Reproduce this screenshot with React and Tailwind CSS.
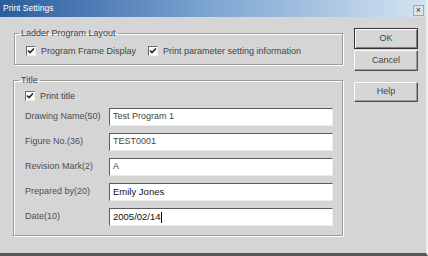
import React from 'react';

const font = { fontFamily: '"Liberation Sans", Arial, sans-serif' };

const CheckBox = ({ label, className = '' }) => (
  <label className={`flex items-center gap-[5px] ${className}`}>
    <span className="w-[10px] h-[10px] bg-white border border-t-[#6b6b6b] border-l-[#6b6b6b] border-b-[#f0f0f0] border-r-[#f0f0f0] flex items-center justify-center">
      <svg width="8" height="8" viewBox="0 0 8 8">
        <path d="M1 3.5 L3 5.5 L7 1.5" fill="none" stroke="#222" strokeWidth="1.6" />
      </svg>
    </span>
    <span className="text-[9px] leading-[12px] text-[#444]">{label}</span>
  </label>
);

const Button = ({ children, isDefault, className = '' }) => (
  <button
    className={`w-[64px] text-[9px] text-[#444] bg-[#d6d6d6] border ${
      isDefault
        ? 'border-[#333] shadow-[inset_1px_1px_0_#fff,inset_-1px_-1px_0_#808080]'
        : 'border-t-[#fafafa] border-l-[#fafafa] border-b-[#505050] border-r-[#505050] shadow-[inset_-1px_-1px_0_#9a9a9a]'
    } ${className}`}
  >
    {children}
  </button>
);

const fields = [
  { label: 'Drawing Name(50)', value: 'Test Program 1' },
  { label: 'Figure No.(36)', value: 'TEST0001' },
  { label: 'Revision Mark(2)', value: 'A' },
  { label: 'Prepared by(20)', value: 'Emily Jones', dark: true },
  { label: 'Date(10)', value: '2005/02/14', dark: true, cursor: true },
];

export default function App() {
  return (
    <div className="w-[428px] h-[256px] bg-[#d5d5d5] flex flex-col border-b-[3px] border-b-[#575757] border-r-2 border-r-[#eef0ee]" style={font}>
      {/* title bar */}
      <div className="h-[17px] flex items-center justify-between pl-[3px] pr-[2px] bg-gradient-to-r from-[#2a5c9e] via-[#7ea6d2] to-[#d4e3f1]">
        <span className="text-[8.5px] text-white">Print Settings</span>
        <span className="self-start mt-[5px] w-[11px] h-[11px] bg-[#dfe3e8] border border-[#9aa] flex items-center justify-center text-[9px] leading-none text-[#333]">×</span>
      </div>

      <div className="flex pt-[10px] pl-[14px]">
        <div className="w-[329px] flex flex-col">
          <fieldset className="border border-[#9c9c9c] shadow-[1px_1px_0_#fff,inset_1px_1px_0_#fff] px-[11px] pt-[6px] pb-[7px]">
            <legend className="ml-[-7px] px-[2px] text-[9px] leading-[12px] text-[#444]">Ladder Program Layout</legend>
            <div className="flex h-[12px]">
              <CheckBox label="Program Frame Display" className="w-[122px]" />
              <CheckBox label="Print parameter setting information" />
            </div>
          </fieldset>

          <fieldset className="mt-[9px] ml-[-1px] border border-[#9c9c9c] shadow-[1px_1px_0_#fff,inset_1px_1px_0_#fff] pl-[11px] pr-[8px] pt-[4px] pb-[9px]">
            <legend className="ml-[-6px] px-[2px] text-[9px] leading-[12px] text-[#444]">Title</legend>
            <CheckBox label="Print title" className="h-[12px]" />
            <div className="mt-[6px] flex flex-col gap-[7px]">
              {fields.map((f) => (
                <div key={f.label} className="flex items-center h-[18px]">
                  <span className="w-[84px] text-[9px] text-[#505050]">{f.label}</span>
                  <div className="w-[224px] h-[18px] bg-white border border-t-[#5c5c5c] border-l-[#5c5c5c] border-b-[#ececec] border-r-[#ececec] flex items-center pl-[3px]">
                    <span className={f.dark ? 'text-[9.5px] text-[#111]' : 'text-[9px] text-[#444]'}>{f.value}</span>
                    {f.cursor && <span className="w-[1px] h-[11px] bg-black" />}
                  </div>
                </div>
              ))}
            </div>
          </fieldset>
        </div>

        <div className="ml-[11px] flex flex-col">
          <Button isDefault className="mt-[1px] h-[21px]">OK</Button>
          <Button className="mt-[1px] h-[21px]">Cancel</Button>
          <Button className="mt-[11px] h-[20px]">Help</Button>
        </div>
      </div>
    </div>
  );
}
